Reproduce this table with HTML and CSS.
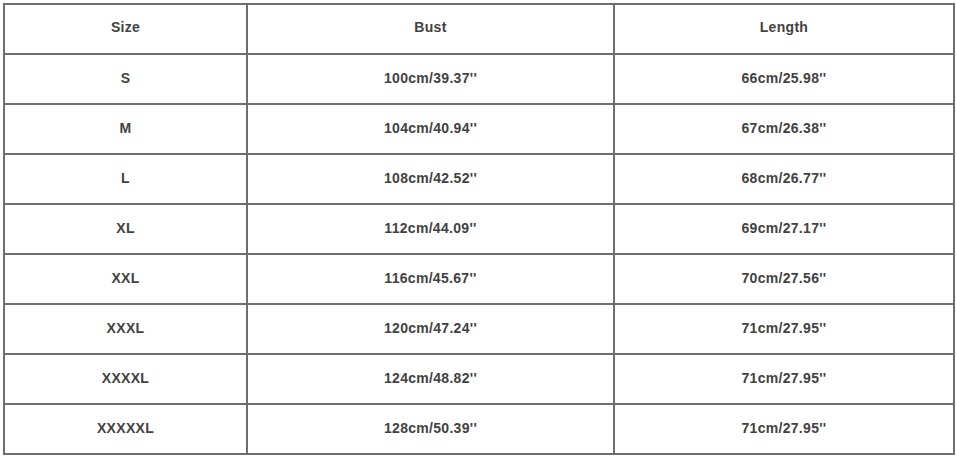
FILE: index.html
```html
<!DOCTYPE html>
<html>
<head>
<meta charset="utf-8">
<link rel="stylesheet" href="styles.css">
</head>
<body>
<table class="size-table">
  <colgroup>
    <col class="c1"><col class="c2"><col class="c3">
  </colgroup>
  <tr class="head"><td>Size</td><td>Bust</td><td>Length</td></tr>
  <tr><td>S</td><td>100cm/39.37''</td><td>66cm/25.98''</td></tr>
  <tr><td>M</td><td>104cm/40.94''</td><td>67cm/26.38''</td></tr>
  <tr><td>L</td><td>108cm/42.52''</td><td>68cm/26.77''</td></tr>
  <tr><td>XL</td><td>112cm/44.09''</td><td>69cm/27.17''</td></tr>
  <tr><td>XXL</td><td>116cm/45.67''</td><td>70cm/27.56''</td></tr>
  <tr><td>XXXL</td><td>120cm/47.24''</td><td>71cm/27.95''</td></tr>
  <tr><td>XXXXL</td><td>124cm/48.82''</td><td>71cm/27.95''</td></tr>
  <tr><td>XXXXXL</td><td>128cm/50.39''</td><td>71cm/27.95''</td></tr>
</table>
</body>
</html>
```
FILE: styles.css
```css
html, body {
  margin: 0;
  padding: 0;
  background: #ffffff;
}
body {
  padding: 3px 0 0 3px;
}
.size-table {
  border-collapse: collapse;
  table-layout: fixed;
  width: 950px;
  font-family: "Liberation Sans", Arial, sans-serif;
  font-size: 14px;
  letter-spacing: 0.3px;
  font-weight: bold;
  color: #424242;
}
.c1 { width: 243px; }
.c2 { width: 367px; }
.c3 { width: 340px; }
.size-table td {
  border: 2px solid #6e6e6e;
  height: 46px;
  padding: 0 0 2px 0;
  text-align: center;
  vertical-align: middle;
}
.size-table .head td {
  height: 44px;
  padding-bottom: 4px;
}
```
